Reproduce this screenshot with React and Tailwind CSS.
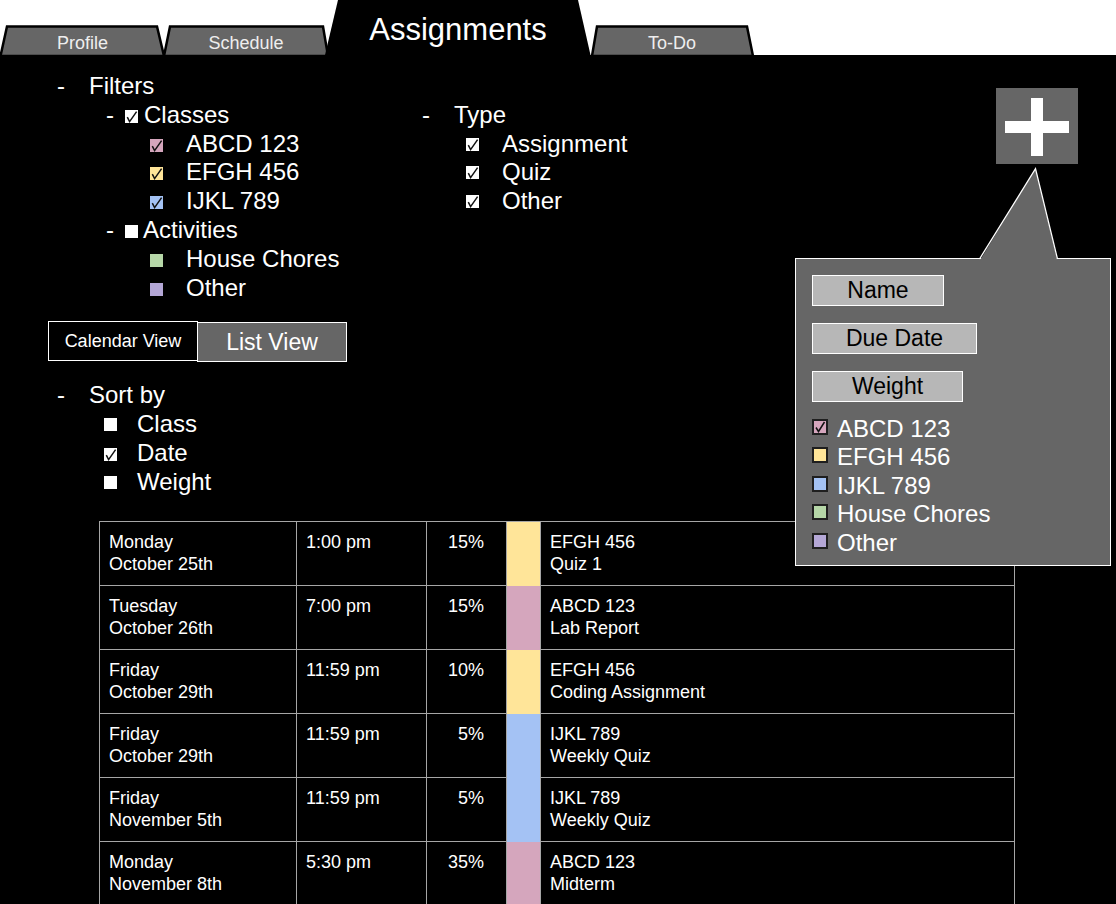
import React from "react";

function Box({ color = "#ffffff", checked = false, className = "" }) {
  return (
    <svg width="13" height="13" viewBox="0 0 13 13" className={"shrink-0 overflow-visible " + className}>
      <rect x="0" y="0" width="13" height="13" fill={color} />
      {checked && (
        <path d="M2.3 7.2 L4.6 11.6 L11.6 1.6" fill="none" stroke="#111" strokeWidth="1.5" />
      )}
    </svg>
  );
}

function GrayTab({ className, vb, points, label }) {
  return (
    <div className={"relative h-[30px] " + className}>
      <svg className="absolute inset-0 h-full w-full" viewBox={vb} preserveAspectRatio="none">
        <polygon points={points} fill="#666666" stroke="#000" strokeWidth="2.5" strokeLinejoin="miter" />
      </svg>
      <div className="relative pt-[5px] text-center text-[18px] leading-[26px] text-[#eeeeee]">{label}</div>
    </div>
  );
}

const rows = [
  { d: "Monday", dd: "October 25th", t: "1:00 pm", w: "15%", c: "bg-[#ffe599]", a: "EFGH 456", b: "Quiz 1" },
  { d: "Tuesday", dd: "October 26th", t: "7:00 pm", w: "15%", c: "bg-[#d5a6bd]", a: "ABCD 123", b: "Lab Report" },
  { d: "Friday", dd: "October 29th", t: "11:59 pm", w: "10%", c: "bg-[#ffe599]", a: "EFGH 456", b: "Coding Assignment" },
  { d: "Friday", dd: "October 29th", t: "11:59 pm", w: "5%", c: "bg-[#a4c2f4]", a: "IJKL 789", b: "Weekly Quiz" },
  { d: "Friday", dd: "November 5th", t: "11:59 pm", w: "5%", c: "bg-[#a4c2f4]", a: "IJKL 789", b: "Weekly Quiz" },
  { d: "Monday", dd: "November 8th", t: "5:30 pm", w: "35%", c: "bg-[#d5a6bd]", a: "ABCD 123", b: "Midterm" },
];

const legend = [
  { label: "ABCD 123", c: "bg-[#d5a6bd]", checked: true },
  { label: "EFGH 456", c: "bg-[#ffe599]" },
  { label: "IJKL 789", c: "bg-[#a4c2f4]" },
  { label: "House Chores", c: "bg-[#b6d7a8]" },
  { label: "Other", c: "bg-[#b4a7d6]" },
];

export default function App() {
  const cell = "border-r border-b border-[#a6a6a6] pt-[9px] pl-[9px]";
  return (
    <div className="w-[1116px] min-h-[904px] bg-white font-['Liberation_Sans',Arial,sans-serif]">
      {/* Tabs */}
      <div className="flex h-[55px] items-end bg-white">
        <GrayTab className="w-[165px]" vb="0 0 165 30" points="7,1.5 157,1.5 164,31 0.5,31" label="Profile" />
        <GrayTab className="-ml-[2px] w-[166px]" vb="0 0 166 30" points="7,1.5 160,1.5 165,31 1,31" label="Schedule" />
        <div className="relative -ml-[4px] h-[55px] w-[266px]">
          <svg className="absolute inset-0 h-full w-full" viewBox="0 0 266 55" preserveAspectRatio="none">
            <polygon points="13,0 253,0 265.5,55 0,55" fill="#000" />
          </svg>
          <div className="relative pt-[12px] text-center text-[31px] leading-[36px] text-white">Assignments</div>
        </div>
        <GrayTab className="-ml-[1px] w-[164px]" vb="0 0 164 30" points="7,1.5 157,1.5 163,31 2,31" label="To-Do" />
      </div>

      {/* Main */}
      <div className="relative min-h-[849px] bg-black pt-[17px] text-[24px] leading-[28.8px] text-white">
        {/* Filters */}
        <div className="flex pl-[57px]">
          <span className="w-[32px]">-</span>
          <span>Filters</span>
        </div>
        <div className="flex pl-[106px]">
          <div className="w-[316px]">
            <div className="flex items-start">
              <span className="w-[19px]">-</span>
              <Box checked className="mt-[9px]" />
              <span className="ml-[6px]">Classes</span>
            </div>
            <div className="flex items-start pl-[44px]">
              <Box color="#d5a6bd" checked className="mt-[9px]" />
              <span className="ml-[23px]">ABCD 123</span>
            </div>
            <div className="flex items-start pl-[44px]">
              <Box color="#ffe599" checked className="mt-[9px]" />
              <span className="ml-[23px]">EFGH 456</span>
            </div>
            <div className="flex items-start pl-[44px]">
              <Box color="#a4c2f4" checked className="mt-[9px]" />
              <span className="ml-[23px]">IJKL 789</span>
            </div>
            <div className="flex items-start">
              <span className="w-[19px]">-</span>
              <Box className="mt-[9px]" />
              <span className="ml-[5px]">Activities</span>
            </div>
            <div className="flex items-start pl-[44px]">
              <Box color="#b6d7a8" className="mt-[9px]" />
              <span className="ml-[23px]">House Chores</span>
            </div>
            <div className="flex items-start pl-[44px]">
              <Box color="#b4a7d6" className="mt-[9px]" />
              <span className="ml-[23px]">Other</span>
            </div>
          </div>
          <div>
            <div className="flex">
              <span className="w-[32px]">-</span>
              <span>Type</span>
            </div>
            <div className="flex items-start pl-[44px]">
              <Box checked className="mt-[8px]" />
              <span className="ml-[23px]">Assignment</span>
            </div>
            <div className="flex items-start pl-[44px]">
              <Box checked className="mt-[8px]" />
              <span className="ml-[23px]">Quiz</span>
            </div>
            <div className="flex items-start pl-[44px]">
              <Box checked className="mt-[8px]" />
              <span className="ml-[23px]">Other</span>
            </div>
          </div>
        </div>

        {/* View toggle */}
        <div className="mt-[19px] flex items-start pl-[48px]">
          <div className="flex h-[40px] w-[150px] items-center justify-center border border-white bg-black text-[18px] leading-[22px]">
            Calendar View
          </div>
          <div className="-ml-[1px] mt-[1px] flex h-[40px] w-[150px] items-center justify-center border border-white bg-[#666666] text-[23px] leading-[26px]">
            List View
          </div>
        </div>

        {/* Sort by */}
        <div className="mt-[19px] flex pl-[57px]">
          <span className="w-[32px]">-</span>
          <span>Sort by</span>
        </div>
        <div className="flex items-start pl-[104px]">
          <Box className="mt-[8px]" />
          <span className="ml-[20px]">Class</span>
        </div>
        <div className="flex items-start pl-[104px]">
          <Box checked className="mt-[9px]" />
          <span className="ml-[20px]">Date</span>
        </div>
        <div className="flex items-start pl-[104px]">
          <Box className="mt-[8px]" />
          <span className="ml-[20px]">Weight</span>
        </div>

        {/* Table */}
        <div className="ml-[99px] mt-[24px] w-[916px] border-l border-t border-[#a6a6a6] text-[18px] leading-[22px]">
          {rows.map((r, i) => (
            <div key={i} className="grid h-[64px] grid-cols-[197px_130px_80px_34px_474px]">
              <div className={cell}>
                <div>{r.d}</div>
                <div>{r.dd}</div>
              </div>
              <div className={cell}>{r.t}</div>
              <div className="border-r border-b border-[#a6a6a6] pt-[9px] pr-[22px] text-right">{r.w}</div>
              <div className={"border-r border-[#a6a6a6] " + r.c}></div>
              <div className={cell}>
                <div>{r.a}</div>
                <div>{r.b}</div>
              </div>
            </div>
          ))}
        </div>

        {/* Add button */}
        <div className="absolute left-[996px] top-[33px] h-[76px] w-[82px] bg-[#666666]">
          <svg width="82" height="76" viewBox="0 0 82 76">
            <rect x="35" y="10" width="12" height="58" fill="#fff" />
            <rect x="9" y="33" width="64" height="12" fill="#fff" />
          </svg>
        </div>

        {/* Popup */}
        <div className="absolute left-[795px] top-[203px] z-10 h-[308px] w-[316px] border border-white bg-[#666666] pl-[16px] pt-[16px]">
          <svg className="absolute left-[183px] top-[-91px] overflow-visible" width="80" height="94" viewBox="0 0 80 94">
            <polygon points="0.5,93 56.5,0.7 78.5,93" fill="#666666" />
            <polyline points="0.5,91 56.5,0.7 78.5,91" fill="none" stroke="#fff" strokeWidth="1.3" />
          </svg>
          <div className="flex flex-col items-start gap-[17px] text-[23px] leading-[29px] text-black">
            <div className="h-[31px] w-[132px] border border-white bg-[#b7b7b7] text-center">Name</div>
            <div className="h-[31px] w-[165px] border border-white bg-[#b7b7b7] text-center">Due Date</div>
            <div className="h-[31px] w-[151px] border border-white bg-[#b7b7b7] text-center">Weight</div>
          </div>
          <div className="mt-[13px] flex flex-col text-[24px] leading-[28.4px] text-white">
            {legend.map((l) => (
              <div key={l.label} className="flex items-start">
                <div className={"relative mt-[4px] h-[16px] w-[16px] shrink-0 border-2 border-[#1f1f1f] " + l.c}>
                  {l.checked && (
                    <svg className="absolute inset-0" width="12" height="12" viewBox="0 0 12 12">
                      <path d="M2 6.5 L4.5 10.5 L10.5 1" fill="none" stroke="#111" strokeWidth="1.5" />
                    </svg>
                  )}
                </div>
                <span className="ml-[9px]">{l.label}</span>
              </div>
            ))}
          </div>
        </div>
      </div>
    </div>
  );
}
